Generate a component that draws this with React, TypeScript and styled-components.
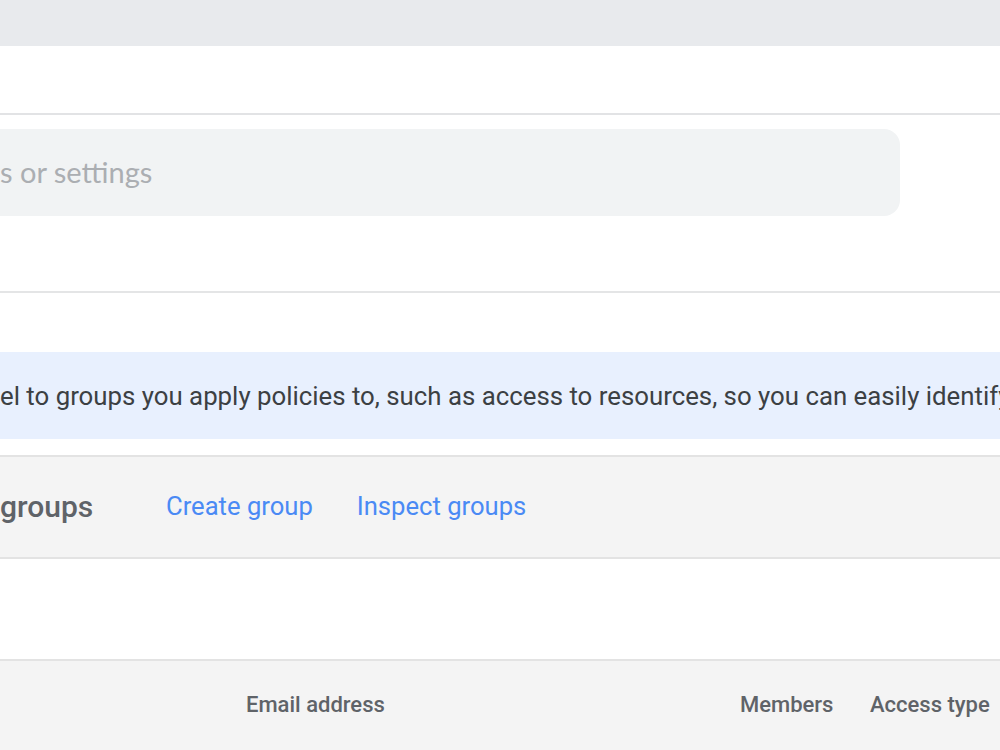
import React from "react";
import styled, { createGlobalStyle } from "styled-components";

const GlobalStyle = createGlobalStyle`
  html, body {
    margin: 0;
    padding: 0;
    background: #ffffff;
    overflow: hidden;
  }
  body {
    font-family: Roboto, "Liberation Sans", Arial, sans-serif;
  }
`;

const Page = styled.div`
  width: 1000px;
  height: 750px;
  display: flex;
  flex-direction: column;
  overflow: hidden;
`;

const TopBar = styled.div`
  height: 46px;
  flex: none;
  background: #e8eaed;
`;

const Header = styled.div`
  height: 67px;
  flex: none;
  border-bottom: 2px solid #e2e3e5;
`;

const SearchSection = styled.div`
  height: 178px;
  flex: none;
  padding-top: 14px;
  box-sizing: border-box;
  border-bottom: 2px solid #e4e5e6;
`;

const SearchBox = styled.div`
  width: 940px;
  height: 87px;
  margin-left: -40px;
  border-radius: 16px;
  background: #f1f3f4;
  display: flex;
  align-items: center;
  box-sizing: border-box;
  padding-bottom: 2px;
`;

const LeftClip = styled.span`
  display: inline-flex;
  justify-content: flex-end;
  width: 0;
  white-space: nowrap;
`;

const Placeholder = styled.span`
  font-family: Lato, "Open Sans", sans-serif;
  font-size: 29px;
  color: #abaeb2;
  white-space: nowrap;
  margin-left: 40px;
`;

const Gap = styled.div<{ $h: number }>`
  height: ${(p) => p.$h}px;
  flex: none;
`;

const Banner = styled.div`
  height: 87px;
  flex: none;
  background: #e8f0fe;
  display: flex;
  align-items: center;
  white-space: nowrap;
  font-size: 25.8px;
  color: #3c4043;
  padding-bottom: 0px;
  box-sizing: border-box;
`;

const Toolbar = styled.div`
  height: 104px;
  flex: none;
  box-sizing: border-box;
  background: #f4f4f4;
  border-top: 2px solid #e3e3e3;
  border-bottom: 2px solid #e3e3e3;
  display: flex;
  align-items: center;
  white-space: nowrap;
  padding-bottom: 2px;
`;

const ToolbarTitle = styled.span`
  font-size: 30px;
  font-weight: 500;
  color: #5f6368;
  width: 166px;
`;

const ActionLink = styled.a`
  font-size: 25.6px;
  color: #4a8af4;
  text-decoration: none;
  margin-right: 44px;
  cursor: pointer;
`;

const TableHeader = styled.div`
  flex: 1;
  background: #f4f4f4;
  border-top: 2px solid #e3e3e3;
  display: grid;
  grid-template-columns: 246px 494px 130px 1fr;
  align-items: start;
  padding-top: 31px;
  white-space: nowrap;
`;

const ColumnLabel = styled.div`
  font-size: 22px;
  font-weight: 500;
  color: #5f6368;
`;

export default function App() {
  return (
    <>
      <GlobalStyle />
      <Page>
        <TopBar />
        <Header />
        <SearchSection>
          <SearchBox>
            <Placeholder>
              <LeftClip>Search for users, group</LeftClip>s or settings
            </Placeholder>
          </SearchBox>
        </SearchSection>
        <Gap $h={59} />
        <Banner>
          <LeftClip>Tip: Add a lab</LeftClip>el to groups you apply policies to, such as access to
          resources, so you can easily identify them.
        </Banner>
        <Gap $h={16} />
        <Toolbar>
          <ToolbarTitle>
            <LeftClip>All </LeftClip>groups
          </ToolbarTitle>
          <ActionLink>Create group</ActionLink>
          <ActionLink>Inspect groups</ActionLink>
        </Toolbar>
        <Gap $h={100} />
        <TableHeader>
          <div />
          <ColumnLabel>Email address</ColumnLabel>
          <ColumnLabel>Members</ColumnLabel>
          <ColumnLabel>Access type</ColumnLabel>
        </TableHeader>
      </Page>
    </>
  );
}
